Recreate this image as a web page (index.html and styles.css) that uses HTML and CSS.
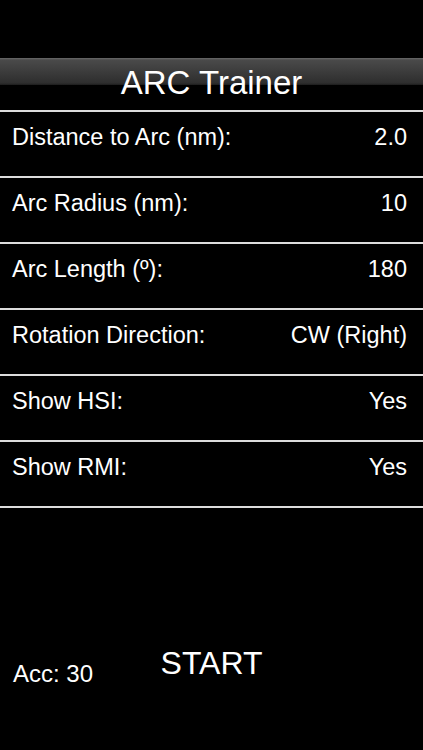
FILE: index.html
```html
<!DOCTYPE html>
<html lang="en">
<head>
    <meta charset="UTF-8">
    <meta name="viewport" content="width=device-width, initial-scale=1.0">
    <title>ARC Trainer</title>
    <link rel="stylesheet" href="styles.css">
</head>
<body>

<div class="header">
    <h1 class="title">ARC Trainer</h1>
</div>

<div class="settings">
    <div class="row"><span>Distance to Arc (nm):</span><span>2.0</span></div>
    <div class="row"><span>Arc Radius (nm):</span><span>10</span></div>
    <div class="row"><span>Arc Length (º):</span><span>180</span></div>
    <div class="row"><span>Rotation Direction:</span><span>CW (Right)</span></div>
    <div class="row"><span>Show HSI:</span><span>Yes</span></div>
    <div class="row"><span>Show RMI:</span><span>Yes</span></div>
</div>

<div class="footer">
    <span class="acc">Acc: 30</span>
    <button type="button" class="start">START</button>
</div>

</body>
</html>
```

FILE: styles.css
```css
body {
    margin: 0;
    background-color: #000;
    color: #fff;
    font-family: "Liberation Sans", Arial, sans-serif;
}

.header {
    margin-top: 58px;
    height: 52px;
    box-sizing: border-box;
    padding-top: 7px;
    background: linear-gradient(to bottom, #6a6a6a 0px, #4a4a4a 2px, #2e2e2e 25px, #1c1c1c 27px, #000 27px);
}

.title {
    margin: 0;
    font-size: 33px;
    font-weight: normal;
    line-height: 36px;
    text-align: center;
}

.settings {
    border-bottom: 2px solid #dcdcdc;
}

.row {
    display: flex;
    justify-content: space-between;
    height: 66px;
    box-sizing: border-box;
    padding: 12px 16px 0 12px;
    border-top: 2px solid #dcdcdc;
    font-size: 23.5px;
    line-height: 27px;
}

.footer {
    display: grid;
    grid-template-columns: 1fr auto 1fr;
    align-items: start;
    margin-top: 137px;
}

.acc {
    padding: 15px 0 0 13px;
    font-size: 24px;
    line-height: 27px;
}

.start {
    padding: 0;
    border: none;
    background: none;
    color: #fff;
    font-family: inherit;
    font-size: 32px;
    line-height: 36px;
    cursor: pointer;
}
```
